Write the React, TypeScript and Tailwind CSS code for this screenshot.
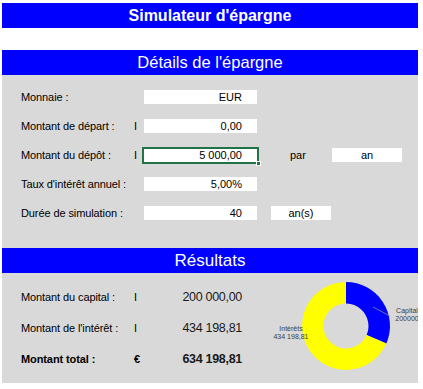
import React from "react";

const font = { fontFamily: '"Liberation Sans", Arial, sans-serif' };

function Field({ value, className = "" }: { value: string; className?: string }) {
  return (
    <div className={`h-[14px] bg-white flex items-center justify-end pr-[15px] text-[11px] leading-none text-black ${className}`}>
      {value}
    </div>
  );
}

function DetailRow({
  label,
  unit,
  value,
  selected,
  children,
}: {
  label: string;
  unit?: string;
  value: string;
  selected?: boolean;
  children?: React.ReactNode;
}) {
  return (
    <div className="h-[14px] flex items-center text-[11px] text-black">
      <div className="w-[113px] pl-[19px] whitespace-nowrap tracking-[-0.1px]">{label}</div>
      <div className="w-[29px] pl-[19px]">{unit}</div>
      <div className="relative w-[113px]">
        <Field value={value} />
        {selected && (
          <div className="absolute left-[-2px] right-[-2px] top-[-1px] bottom-[-2px] border-2 border-[#217346]">
            <div className="absolute right-[-4px] bottom-[-4px] w-[5px] h-[5px] bg-[#217346] border border-white" />
          </div>
        )}
      </div>
      {children}
    </div>
  );
}

function ResultRow({ label, unit, value, bold }: { label: string; unit: string; value: string; bold?: boolean }) {
  return (
    <div className={`h-[16px] flex items-center text-black ${bold ? "font-bold" : ""}`}>
      <div className="w-[113px] pl-[19px] text-[11px] whitespace-nowrap tracking-[-0.1px]">{label}</div>
      <div className="w-[29px] pl-[19px] text-[11px]">{unit}</div>
      <div className="w-[98px] text-right text-[12.5px] tracking-[-0.3px] text-[#1a1a1a]">{value}</div>
    </div>
  );
}

function Donut() {
  return (
    <svg width="148" height="110" viewBox="0 0 148 110">
      <path d="M76,9 A44,44 0 0 1 116.35,70.55 L96.6,61.97 A22.5,22.5 0 0 0 76,30.5 Z" fill="#0000ff" />
      <path d="M116.35,70.55 A44,44 0 1 1 76,9 L76,30.5 A22.5,22.5 0 1 0 96.6,61.97 Z" fill="#ffff00" />
      <line x1="103" y1="34" x2="120" y2="43" stroke="#8a8a9a" strokeWidth="0.8" />
      <g fontSize="7" fill="#404040" textAnchor="middle" style={font}>
        <text x="137" y="40">Capital</text>
        <text x="137" y="48">200000</text>
        <text x="21" y="58">Intérêts</text>
        <text x="21" y="66">434 198,81</text>
      </g>
    </svg>
  );
}

export default function App() {
  return (
    <div className="w-[423px] h-[389px] bg-white pt-[3px] pl-[2px]" style={font}>
      <div className="w-[416px]">
        <div className="h-[25px] bg-[#0000ff] flex items-center justify-center text-white font-bold text-[16px]">
          Simulateur d'épargne
        </div>

        <div className="h-[22px]" />

        <div className="h-[25px] bg-[#0000ff] flex items-center justify-center text-white text-[16.5px]">
          Détails de l'épargne
        </div>

        <div className="h-[173px] bg-[#d9d9d9] pt-[15px] flex flex-col gap-[15px]">
          <DetailRow label="Monnaie :" value="EUR" />
          <DetailRow label="Montant de départ :" unit="I" value="0,00" />
          <DetailRow label="Montant du dépôt :" unit="I" value="5 000,00" selected>
            <div className="w-[75px] pl-[33px]">par</div>
            <div className="w-[70px] h-[14px] bg-white flex items-center justify-center">an</div>
          </DetailRow>
          <DetailRow label="Taux d'intérêt annuel :" value="5,00%" />
          <DetailRow label="Durée de simulation :" value="40">
            <div className="ml-[14px] w-[60px] h-[14px] bg-white flex items-center justify-center">an(s)</div>
          </DetailRow>
        </div>

        <div className="h-[25px] bg-[#0000ff] flex items-center justify-center text-white text-[17px]">
          Résultats
        </div>

        <div className="h-[110px] bg-[#d9d9d9] flex">
          <div className="w-[268px] pt-[16px] flex flex-col gap-[15px]">
            <ResultRow label="Montant du capital :" unit="I" value="200 000,00" />
            <ResultRow label="Montant de l'intérêt :" unit="I" value="434 198,81" />
            <ResultRow label="Montant total :" unit="€" value="634 198,81" bold />
          </div>
          <Donut />
        </div>
      </div>
    </div>
  );
}
